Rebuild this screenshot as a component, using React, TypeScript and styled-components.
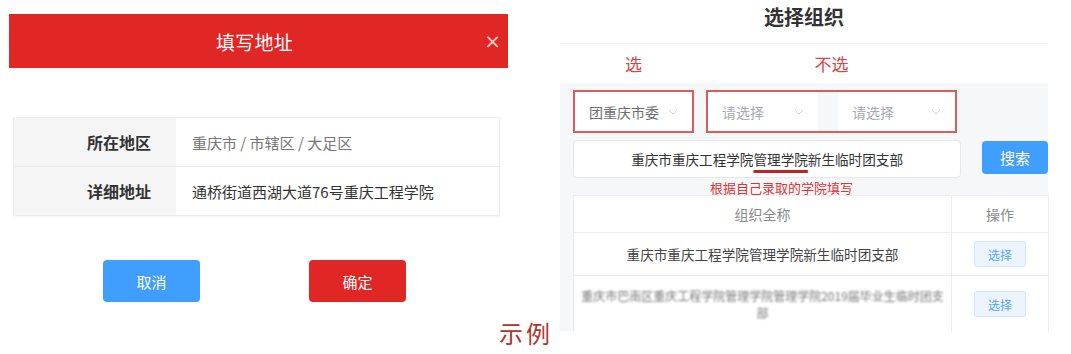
import styled, { createGlobalStyle } from "styled-components";
import React from "react";

const GlobalStyle = createGlobalStyle`
  body {
    margin: 0;
    background: #ffffff;
    font-family: "Noto Sans CJK SC", "Noto Sans", sans-serif;
    color: #333333;
  }
`;

const addressRows = [
  { label: "所在地区", value: "重庆市 / 市辖区 / 大足区", muted: true },
  { label: "详细地址", value: "通桥街道西湖大道76号重庆工程学院", muted: false },
];

const Chevron = () => (
  <svg width="10" height="6" viewBox="0 0 10 6" fill="none">
    <path d="M1 1l4 4 4-4" stroke="#c6c9cf" strokeWidth="0.9" />
  </svg>
);

const App = () => {
  return (
    <>
      <GlobalStyle />
      <Page>
        <LeftColumn>
          <DialogHeader>
            <span />
            <HeaderTitle>填写地址</HeaderTitle>
            <CloseMark>×</CloseMark>
          </DialogHeader>
          <AddressTable>
            {addressRows.map((row, index) => (
              <AddressRow key={index} last={index === addressRows.length - 1}>
                <AddressLabel>{row.label}</AddressLabel>
                <AddressValue muted={row.muted}>{row.value}</AddressValue>
              </AddressRow>
            ))}
          </AddressTable>
          <ButtonRow>
            <ActionButton color="#409eff">取消</ActionButton>
            <ActionButton color="#e12626">确定</ActionButton>
          </ButtonRow>
          <Caption>示例</Caption>
        </LeftColumn>

        <RightColumn>
          <PanelTitle>选择组织</PanelTitle>
          <NoteRow>
            <Note width={121}>选</Note>
            <Note width={251}>不选</Note>
          </NoteRow>
          <PanelBody>
            <SelectRow>
              <Frame width={121}>
                <Select>
                  <SelectText>团重庆市委</SelectText>
                  <Chevron />
                </Select>
              </Frame>
              <Frame width={251}>
                <Select width={110}>
                  <SelectText placeholder>请选择</SelectText>
                  <Chevron />
                </Select>
                <FrameGap />
                <Select>
                  <SelectText placeholder>请选择</SelectText>
                  <Chevron />
                </Select>
              </Frame>
            </SelectRow>
            <SearchRow>
              <SearchInput>
                重庆市重庆工程学院<Marked>管理学院</Marked>新生临时团支部
              </SearchInput>
              <SearchButton>搜索</SearchButton>
            </SearchRow>
            <Hint>根据自己录取的学院填写</Hint>
            <OrgTable>
              <OrgRow height={37}>
                <OrgCell>
                  <HeadText>组织全称</HeadText>
                </OrgCell>
                <OrgCell>
                  <HeadText>操作</HeadText>
                </OrgCell>
              </OrgRow>
              <OrgRow height={43}>
                <OrgCell>
                  <RowText>重庆市重庆工程学院管理学院新生临时团支部</RowText>
                </OrgCell>
                <OrgCell>
                  <PickButton>选择</PickButton>
                </OrgCell>
              </OrgRow>
              <OrgRow height={56} last>
                <OrgCell>
                  <BlurText>
                    <NoWrap>重庆市巴南区重庆工程学院管理学院管理学院2019届毕业生临时团支</NoWrap>
                    <br />部
                  </BlurText>
                </OrgCell>
                <OrgCell>
                  <PickButton>选择</PickButton>
                </OrgCell>
              </OrgRow>
            </OrgTable>
          </PanelBody>
        </RightColumn>
      </Page>
    </>
  );
};

export default App;

const Page = styled.div`
  display: flex;
  padding-left: 9px;
  width: 1071px;
  height: 354px;
  box-sizing: border-box;
  overflow: hidden;
`;

const LeftColumn = styled.div`
  display: flex;
  flex-direction: column;
  width: 544px;
`;

const DialogHeader = styled.div`
  display: grid;
  grid-template-columns: 1fr auto 1fr;
  align-items: center;
  width: 499px;
  height: 54px;
  margin-top: 14px;
  padding-left: 4px;
  box-sizing: border-box;
  background-color: #e12626;
`;

const HeaderTitle = styled.span`
  font-size: 19px;
  color: #ffffff;
  letter-spacing: 0.3px;
  transform: translateX(-6px);
`;

const CloseMark = styled.span`
  justify-self: end;
  padding-right: 7px;
  font-family: "DejaVu Sans", sans-serif;
  font-size: 20px;
  color: rgba(255, 255, 255, 0.8);
`;

const AddressTable = styled.div`
  display: flex;
  flex-direction: column;
  width: 485px;
  margin: 49px 0 0 4px;
  border: 1px solid #ececec;
  border-radius: 2px;
  box-shadow: 0 1px 2px rgba(0, 0, 0, 0.04);
`;

const AddressRow = styled.div<{ last?: boolean }>`
  display: flex;
  height: 48px;
  border-bottom: ${(props) => (props.last ? "none" : "1px solid #ececec")};
`;

const AddressLabel = styled.div`
  display: flex;
  align-items: center;
  justify-content: flex-end;
  width: 162px;
  padding-right: 25px;
  box-sizing: border-box;
  background-color: #f5f5f5;
  font-size: 16px;
  font-weight: 700;
  color: #333333;
`;

const AddressValue = styled.div<{ muted?: boolean }>`
  display: flex;
  align-items: center;
  padding-left: 16px;
  font-size: 15px;
  color: ${(props) => (props.muted ? "#777777" : "#333333")};
`;

const ButtonRow = styled.div`
  display: flex;
  justify-content: center;
  gap: 109px;
  width: 491px;
  margin-top: 44px;
`;

const ActionButton = styled.div<{ color: string }>`
  display: flex;
  align-items: center;
  justify-content: center;
  width: 97px;
  height: 42px;
  border-radius: 4px;
  background-color: ${(props) => props.color};
  color: #ffffff;
  font-size: 15px;
`;

const Caption = styled.div`
  align-self: flex-end;
  margin-top: 13px;
  font-size: 24px;
  letter-spacing: 3px;
  color: #b3322f;
`;

const RightColumn = styled.div`
  display: flex;
  flex-direction: column;
  width: 488px;
  margin-left: 7px;
`;

const PanelTitle = styled.div`
  height: 44px;
  line-height: 34px;
  box-sizing: border-box;
  border-bottom: 1px solid #f0f0f0;
  text-align: center;
  font-size: 20px;
  font-weight: 700;
  color: #333333;
`;

const NoteRow = styled.div`
  display: flex;
  align-items: center;
  gap: 12px;
  height: 39px;
  padding-left: 13px;
`;

const Note = styled.div<{ width: number }>`
  width: ${(props) => props.width}px;
  text-align: center;
  font-size: 17px;
  color: #d94545;
`;

const PanelBody = styled.div`
  display: flex;
  flex-direction: column;
  height: 248px;
  padding: 7px 0 0 13px;
  box-sizing: border-box;
  background-color: #f6f7f9;
`;

const SelectRow = styled.div`
  display: flex;
  gap: 12px;
`;

const Frame = styled.div<{ width: number }>`
  display: flex;
  width: ${(props) => props.width}px;
  height: 43px;
  box-sizing: border-box;
  border: 2px solid #dc5b5b;
`;

const FrameGap = styled.div`
  width: 20px;
  background-color: #f6f7f9;
`;

const Select = styled.div<{ width?: number }>`
  display: flex;
  align-items: center;
  justify-content: space-between;
  flex: ${(props) => (props.width ? `0 0 ${props.width}px` : "1")};
  padding: 0 14px;
  box-sizing: border-box;
  background-color: #ffffff;
`;

const SelectText = styled.span<{ placeholder?: boolean }>`
  font-size: 14px;
  color: ${(props) => (props.placeholder ? "#a8abb2" : "#707070")};
`;

const SearchRow = styled.div`
  display: flex;
  align-items: flex-start;
  margin-top: 7px;
`;

const SearchInput = styled.div`
  display: flex;
  align-items: center;
  justify-content: center;
  width: 389px;
  height: 38px;
  box-sizing: border-box;
  border: 1px solid #e6e8eb;
  border-radius: 4px;
  background-color: #ffffff;
  font-size: 13.6px;
  color: #333333;
`;

const Marked = styled.span`
  text-decoration: underline;
  text-decoration-color: #c42222;
  text-decoration-thickness: 3px;
  text-underline-offset: 5px;
`;

const SearchButton = styled.div`
  display: flex;
  align-items: center;
  justify-content: center;
  width: 66px;
  height: 33px;
  margin: 1px 0 0 21px;
  border-radius: 4px;
  background-color: #409eff;
  color: #ffffff;
  font-size: 15px;
`;

const Hint = styled.div`
  width: 389px;
  height: 17px;
  padding-left: 28px;
  box-sizing: border-box;
  line-height: 19px;
  text-align: center;
  font-size: 13px;
  color: #e03333;
`;

const OrgTable = styled.div`
  display: flex;
  flex-direction: column;
  width: 475px;
  border-left: 1px solid #eceef2;
  border-top: 1px solid #eceef2;
  background-color: #ffffff;
`;

const OrgRow = styled.div<{ height: number; last?: boolean }>`
  display: grid;
  grid-template-columns: 378px 1fr;
  height: ${(props) => props.height}px;
  box-sizing: border-box;
  border-bottom: ${(props) => (props.last ? "none" : "1px solid #eceef2")};
`;

const OrgCell = styled.div`
  display: flex;
  align-items: center;
  justify-content: center;
  border-right: 1px solid #eceef2;
  text-align: center;
`;

const HeadText = styled.span`
  font-size: 14px;
  color: #8a8a8a;
`;

const RowText = styled.span`
  font-size: 13.6px;
  color: #444444;
`;

const BlurText = styled.span`
  font-size: 12px;
  line-height: 17px;
  color: #777777;
  filter: blur(1.3px);
`;

const NoWrap = styled.span`
  white-space: nowrap;
`;

const PickButton = styled.div`
  display: flex;
  align-items: center;
  justify-content: center;
  width: 52px;
  height: 26px;
  box-sizing: border-box;
  border: 1px solid #d4e8fc;
  border-radius: 3px;
  background-color: #ecf5ff;
  font-size: 12px;
  color: #5aa6f2;
`;
